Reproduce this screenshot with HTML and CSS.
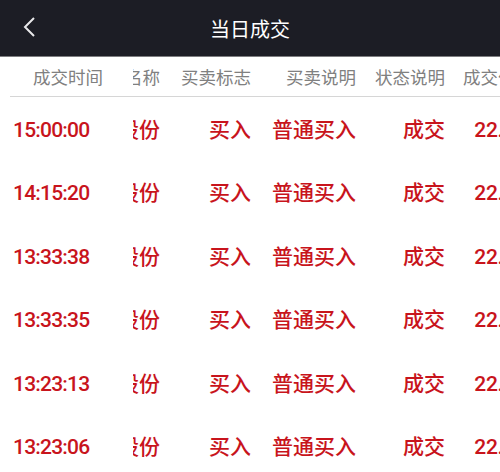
FILE: index.html
```html
<!DOCTYPE html>
<html>
  <head>
    <meta charset="UTF-8">
    <title>当日成交</title>
    <link rel="stylesheet" href="styles.css">
  </head>
  <body>

    <div class="topbar">
      <svg class="back" width="14" height="22" viewBox="0 0 14 22">
        <polyline points="11,2 2,11 11,20" fill="none" stroke="#e8e8ea" stroke-width="2"/>
      </svg>
      <span class="titulo">当日成交</span>
    </div>

    <div class="fila cabecera">
      <div class="fija">成交时间</div>
      <div class="scroll">
        <div class="pista">
          <div class="c nombre">名称</div>
          <div class="c marca">买卖标志</div>
          <div class="c desc">买卖说明</div>
          <div class="c estado">状态说明</div>
          <div class="c precio">成交价格</div>
        </div>
      </div>
    </div>

    <div class="fila dato">
      <div class="fija">15:00:00</div>
      <div class="scroll"><div class="pista">
        <div class="c nombre">股份</div><div class="c marca">买入</div><div class="c desc">普通买入</div><div class="c estado">成交</div><div class="c precio">22.500</div>
      </div></div>
    </div>
    <div class="fila dato">
      <div class="fija">14:15:20</div>
      <div class="scroll"><div class="pista">
        <div class="c nombre">股份</div><div class="c marca">买入</div><div class="c desc">普通买入</div><div class="c estado">成交</div><div class="c precio">22.500</div>
      </div></div>
    </div>
    <div class="fila dato">
      <div class="fija">13:33:38</div>
      <div class="scroll"><div class="pista">
        <div class="c nombre">股份</div><div class="c marca">买入</div><div class="c desc">普通买入</div><div class="c estado">成交</div><div class="c precio">22.500</div>
      </div></div>
    </div>
    <div class="fila dato">
      <div class="fija">13:33:35</div>
      <div class="scroll"><div class="pista">
        <div class="c nombre">股份</div><div class="c marca">买入</div><div class="c desc">普通买入</div><div class="c estado">成交</div><div class="c precio">22.500</div>
      </div></div>
    </div>
    <div class="fila dato">
      <div class="fija">13:23:13</div>
      <div class="scroll"><div class="pista">
        <div class="c nombre">股份</div><div class="c marca">买入</div><div class="c desc">普通买入</div><div class="c estado">成交</div><div class="c precio">22.500</div>
      </div></div>
    </div>
    <div class="fila dato">
      <div class="fija">13:23:06</div>
      <div class="scroll"><div class="pista">
        <div class="c nombre">股份</div><div class="c marca">买入</div><div class="c desc">普通买入</div><div class="c estado">成交</div><div class="c precio">22.500</div>
      </div></div>
    </div>

  </body>
</html>
```

FILE: styles.css
```css
body {
  margin: 0;
  background: #fff;
  font-family: Roboto, "Noto Sans CJK SC", sans-serif;
  overflow: hidden;
}

.topbar {
  height: 56px;
  background: #1c1d25;
  border-bottom: 1px solid #7d7d80;
  display: flex;
  align-items: center;
  justify-content: center;
  position: relative;
}

.back {
  position: absolute;
  left: 23px;
  top: 16px;
}

.titulo {
  color: #fff;
  font-size: 20px;
  font-family: "Noto Sans CJK SC", sans-serif;
}

.fila {
  display: flex;
  align-items: center;
  white-space: nowrap;
}

.fija {
  flex: none;
  background: #fff;
}

.scroll {
  flex: 1;
  overflow: hidden;
}

.pista {
  display: flex;
  align-items: baseline;
  margin-left: -53px;
}

.c {
  flex: none;
  text-align: right;
}

.nombre { width: 80px; }
.marca { width: 91px; }
.desc { width: 105px; }
.estado { width: 89px; }
.precio { width: 93px; }

/* cabecera */
.cabecera {
  height: 39px;
  margin-left: 10px;
  border-bottom: 1px solid #d6d6d6;
  color: #808080;
  font-size: 17.5px;
  line-height: 24px;
  font-family: "Noto Sans CJK SC", sans-serif;
}

.cabecera .fija {
  width: 100px;
  padding-left: 23px;
}

.cabecera .precio {
  width: 88px;
}

/* filas de datos */
.dato {
  height: 63.4px;
  color: #c8141c;
  font-size: 21px;
  line-height: 30px;
  font-weight: 500;
  align-items: baseline;
  padding-top: 16px;
  box-sizing: border-box;
}

.dato .fija {
  width: 120px;
  padding-left: 13px;
  letter-spacing: -0.8px;
}

.dato .c {
  font-family: "Noto Sans CJK SC", sans-serif;
}

.dato .precio {
  font-family: Roboto, sans-serif;
  letter-spacing: -0.3px;
}
```
